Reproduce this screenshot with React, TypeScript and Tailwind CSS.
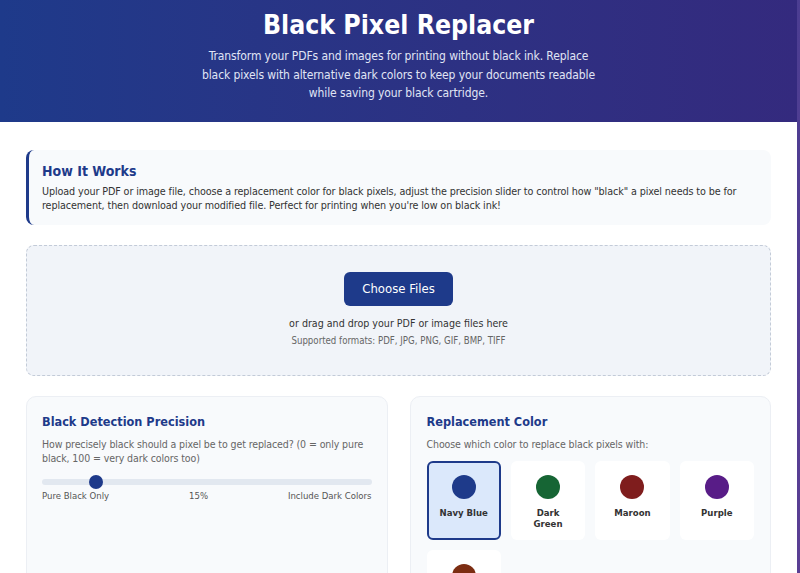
import { useState } from "react"

const colors = [
  { name: "Navy Blue", hex: "#1e3a8a" },
  { name: "Dark Green", hex: "#166534" },
  { name: "Maroon", hex: "#7f1d1d" },
  { name: "Purple", hex: "#581c87" },
  { name: "Brown", hex: "#7c2d12" },
]

const App = () => {
  const [selected, setSelected] = useState("Navy Blue")
  const precision = 15

  return (
    <div
      className="min-h-screen bg-gradient-to-br from-[#3b3b8f] to-[#5b3f94]"
      style={{ fontFamily: '"DejaVu Sans Condensed", "DejaVu Sans", Verdana, sans-serif' }}
    >
      <div className="w-[797px] min-h-screen bg-white">
        <header className="h-[122px] bg-gradient-to-r from-[#1e3a8a] to-[#342a7e] text-center pt-[8px]">
          <h1 className="text-[26.4px] font-bold text-white leading-[34px]">Black Pixel Replacer</h1>
          <p className="mx-auto mt-[5px] w-[402px] text-[12px] leading-[18.5px] text-[#e0e5f5] tracking-[-0.1px]">
            Transform your PDFs and images for printing without black ink. Replace black pixels with alternative dark
            colors to keep your documents readable while saving your black cartridge.
          </p>
        </header>

        <main className="px-[26px] pt-[28px] flex flex-col gap-[20px]">
          <section className="bg-[#f8fafc] border-l-[3px] border-[#1e3a8a] rounded-lg px-[13px] pt-[11px] pb-[12px]">
            <h2 className="text-[14px] font-bold text-[#1e3a8a] leading-[20px]">How It Works</h2>
            <p className="mt-[4px] text-[10.7px] leading-[14px] text-[#333] tracking-[-0.1px]">
              Upload your PDF or image file, choose a replacement color for black pixels, adjust the precision slider to
              control how "black" a pixel needs to be for replacement, then download your modified file. Perfect for
              printing when you're low on black ink!
            </p>
          </section>

          <section className="h-[131px] bg-[#f1f4f9] border border-dashed border-[#c3cbd8] rounded-lg flex flex-col items-center pt-[26px]">
            <button className="w-[109px] h-[34px] bg-[#1e3a8a] rounded-md text-white text-[13px]">Choose Files</button>
            <p className="mt-[9px] text-[10.6px] text-[#333] leading-[16px]">
              or drag and drop your PDF or image files here
            </p>
            <p className="mt-[3px] text-[9.6px] text-[#666] leading-[14px]">
              Supported formats: PDF, JPG, PNG, GIF, BMP, TIFF
            </p>
          </section>

          <div className="grid grid-cols-2 gap-[22px]">
            <section className="h-[200px] bg-[#f8fafc] border border-[#eceff4] rounded-[10px] px-[15px] pt-[16px]">
              <h3 className="text-[12.6px] font-bold text-[#1e3a8a] leading-[18px]">Black Detection Precision</h3>
              <p className="mt-[7px] text-[10.5px] leading-[13.5px] text-[#666] tracking-[-0.1px]">
                How precisely black should a pixel be to get replaced? (0 = only pure black, 100 = very dark colors too)
              </p>
              <div className="mt-[10px] relative h-[14px] flex items-center">
                <div className="w-full h-[6px] rounded-full bg-[#e2e8f0]" />
                <div className="absolute inset-y-0 left-[7px] right-[7px]">
                  <div
                    className="absolute top-0 w-[14px] h-[14px] rounded-full bg-[#1e3a8a] -translate-x-1/2"
                    style={{ left: `${precision}%` }}
                  />
                </div>
              </div>
              <div className="flex justify-between text-[9.5px] text-[#555] leading-[14px]">
                <span>Pure Black Only</span>
                <span>{precision}%</span>
                <span>Include Dark Colors</span>
              </div>
            </section>

            <section className="h-[200px] bg-[#f8fafc] border border-[#eceff4] rounded-[10px] px-[16px] pt-[16px]">
              <h3 className="text-[12.6px] font-bold text-[#1e3a8a] leading-[18px]">Replacement Color</h3>
              <p className="mt-[7px] text-[10.5px] leading-[13.5px] text-[#666] tracking-[-0.1px]">
                Choose which color to replace black pixels with:
              </p>
              <div className="mt-[9px] grid grid-cols-4 gap-[10px]">
                {colors.map((c) => (
                  <button
                    key={c.name}
                    onClick={() => setSelected(c.name)}
                    className={
                      selected === c.name
                        ? "h-[79px] rounded-md border-2 border-[#1e3a8a] bg-[#dbe8fb] flex flex-col items-center pt-[12px] px-2"
                        : "h-[79px] rounded-md border-2 border-transparent bg-white flex flex-col items-center pt-[12px] px-2"
                    }
                  >
                    <span className="w-[24px] h-[24px] rounded-full" style={{ backgroundColor: c.hex }} />
                    <span className="mt-[8px] text-[9.5px] font-bold text-[#333] leading-[11px] text-center">
                      {c.name}
                    </span>
                  </button>
                ))}
              </div>
            </section>
          </div>
        </main>
      </div>
    </div>
  )
}

export default App
